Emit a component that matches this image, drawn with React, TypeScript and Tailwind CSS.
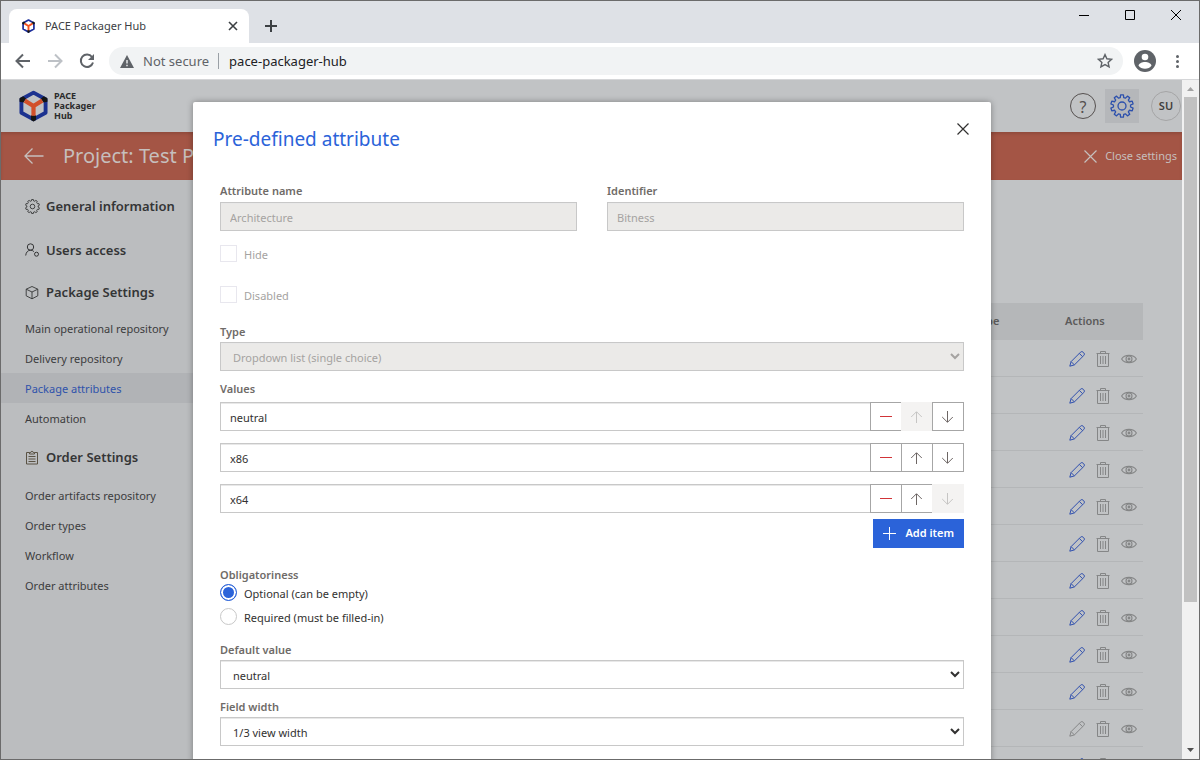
import type { ReactNode } from 'react';
import { clsx } from 'clsx';

const packageLinks = [
  'Main operational repository',
  'Delivery repository',
  'Package attributes',
  'Automation',
];
const orderLinks = ['Order artifacts repository', 'Order types', 'Workflow', 'Order attributes'];
const initialValues = ['neutral', 'x86', 'x64'];
const LOCKED_ROW = 10;

const labelClass = 'block text-[11px] leading-4 font-semibold text-[#6f6b68]';
const controlClass =
  'h-[29px] w-full min-w-0 rounded-none border border-[#c8c8c8] bg-white pt-0.5 text-[11px] text-[#323130] shadow-[inset_0_1px_0_#e8e8e8] disabled:bg-[#ebeae8] disabled:text-[#a5a3a1] disabled:opacity-100';

function gearPath(teeth: number, outer: number, inner: number, c: number) {
  const step = (Math.PI * 2) / teeth;
  const parts: string[] = [];
  for (let i = 0; i < teeth; i++) {
    const a = i * step - Math.PI / 2;
    [
      [a - step * 0.32, inner],
      [a - step * 0.2, outer],
      [a + step * 0.2, outer],
      [a + step * 0.32, inner],
    ].forEach(([angle, r]) => {
      parts.push(`${(c + r * Math.cos(angle)).toFixed(2)} ${(c + r * Math.sin(angle)).toFixed(2)}`);
    });
  }
  return `M${parts.join('L')}Z`;
}

interface IconProps {
  className?: string;
  children: ReactNode;
  box: number;
  stroke?: number;
}

function Icon({ className, children, box, stroke = 1 }: IconProps) {
  return (
    <svg
      className={clsx('shrink-0', className)}
      viewBox={`0 0 ${box} ${box}`}
      fill="none"
      stroke="currentColor"
      strokeWidth={stroke}
      aria-hidden
    >
      {children}
    </svg>
  );
}

function LogoMark({ className, dim }: { className: string; dim?: boolean }) {
  const blue = dim ? '#1c3290' : '#1d2f9c';
  const orange = dim ? '#d2502b' : '#f4511e';
  return (
    <svg className={className} viewBox="0 0 30 32" fill="none" aria-hidden>
      <path d="M15 2.2 27.500 9v14L15 29.800 2.500 23V9Z" stroke={blue} strokeWidth="4" strokeLinejoin="round" />
      <path d="M.6 11.500V8L4.400 5.800 7.400 8.600 4.600 12.500ZM29.400 11.500V8l-3.800-2.200L22.600 8.600l2.800 3.900ZM12.400 25.500h5.200v4.900L15 32l-2.600-1.600Z" fill="#141414" />
      <path d="M6 10.500 15 16l9-5.500M15 16v10" stroke={orange} strokeWidth="4.4" />
    </svg>
  );
}

function BrowserChrome() {
  return (
    <>
      <div className="flex h-[42px] shrink-0 bg-[#dee1e6] pl-2">
        <div className="mt-2 flex w-60 items-center rounded-t-lg bg-white pr-2 pl-[13px]">
          <LogoMark className="h-[14px] w-[13px]" />
          <span className="ml-[10px] flex-1 text-[11px] text-[#3c4043]">PACE Packager Hub</span>
          <button type="button" aria-label="Close tab" className="flex size-4 items-center justify-center text-[#3c4043]">
            <Icon box={10} className="size-[10px]" stroke={1.6}>
              <path d="m1 1 8 8M9 1 1 9" />
            </Icon>
          </button>
        </div>
        <button type="button" aria-label="New tab" className="mt-2 ml-3 flex w-5 items-center justify-center text-[#3c4043]">
          <Icon box={12} className="size-3" stroke={2}>
            <path d="M6 0v12M0 6h12" />
          </Icon>
        </button>
        <div className="ml-auto flex h-7 text-black">
          <button type="button" aria-label="Minimize" className="flex w-[46px] items-center justify-center">
            <Icon box={10} className="size-[10px]">
              <path d="M0 5.500h10" />
            </Icon>
          </button>
          <button type="button" aria-label="Maximize" className="flex w-[46px] items-center justify-center">
            <Icon box={10} className="size-[10px]">
              <path d="M.5.5h9v9h-9z" />
            </Icon>
          </button>
          <button type="button" aria-label="Close" className="flex w-[46px] items-center justify-center">
            <Icon box={10} className="size-[10px]">
              <path d="m0 0 10 10M10 0 0 10" />
            </Icon>
          </button>
        </div>
      </div>
      <div className="flex h-[37px] shrink-0 items-center border-b border-[#d5d6d8] bg-white px-[14px]">
        <button type="button" aria-label="Back" className="text-[#5f6368]">
          <Icon box={16} className="size-4" stroke={2}>
            <path d="M15 8H2M8 1.500 1.500 8 8 14.500" />
          </Icon>
        </button>
        <button type="button" aria-label="Forward" className="ml-4 text-[#bdc1c6]">
          <Icon box={16} className="size-4" stroke={2}>
            <path d="M1 8h13M8 1.500 14.500 8 8 14.500" />
          </Icon>
        </button>
        <button type="button" aria-label="Reload" className="ml-4 text-[#5f6368]">
          <Icon box={16} className="size-4" stroke={2}>
            <path d="M13 4A6.200 6.200 0 1 0 14 9.500" />
            <path d="M15 1v6H9Z" fill="currentColor" stroke="none" />
          </Icon>
        </button>
        <div className="ml-[14px] flex h-7 flex-1 items-center rounded-full bg-[#f1f3f4] pr-[10px] pl-[11px] text-[13px]">
          <svg className="h-[13px] w-[14px] shrink-0" viewBox="0 0 14 13" aria-hidden>
            <path d="M7 0 14 13H0Z" fill="#5f6368" />
            <path d="M6.300 5h1.400v3.500H6.300zM6.300 9.700h1.400v1.500H6.300z" fill="#f1f3f4" />
          </svg>
          <span className="ml-[9px] pt-0.5 text-[#5f6368]">Not secure</span>
          <span className="mr-[10px] ml-[9px] h-4 w-px bg-[#9aa0a6]" />
          <input
            aria-label="Address"
            defaultValue="pace-packager-hub"
            className="min-w-0 flex-1 bg-transparent pt-0.5 text-[#202124] outline-none"
          />
          <Icon box={16} className="size-4 text-[#5f6368]" stroke={1.4}>
            <path d="m8 1.600 1.900 4.200 4.600.5-3.400 3.100 1 4.500L8 11.600l-4.100 2.300 1-4.500L1.500 6.300l4.600-.5Z" />
          </Icon>
        </div>
        <svg className="ml-[11px] size-[22px]" viewBox="0 0 22 22" aria-label="Profile">
          <circle cx="11" cy="11" r="11" fill="#5f6368" />
          <circle cx="11" cy="7" r="3.300" fill="#fff" />
          <path d="M4.500 15.500c1-4.700 12-4.700 13 0-2.500 4.300-10.500 4.300-13 0Z" fill="#fff" />
        </svg>
        <button type="button" aria-label="Menu" className="ml-[13px] flex w-4 flex-col items-center gap-[2px]">
          <span className="size-[3px] rounded-full bg-[#5f6368]" />
          <span className="size-[3px] rounded-full bg-[#5f6368]" />
          <span className="size-[3px] rounded-full bg-[#5f6368]" />
        </button>
      </div>
    </>
  );
}

function AppHeader() {
  return (
    <header className="flex h-13 shrink-0 items-center pr-px pl-[18px]">
      <LogoMark className="h-8 w-[29px]" dim />
      <div className="ml-[6px] text-[9px] leading-[10px] font-bold text-[#2b2b2c]">
        PACE
        <br />
        Packager
        <br />
        Hub
      </div>
      <button
        type="button"
        aria-label="Help"
        className="ml-auto flex size-[26px] items-center justify-center rounded-full border border-[#55504f] pt-0.5 text-base text-[#55504f]"
      >
        ?
      </button>
      <button
        type="button"
        aria-label="Settings"
        className="ml-[9px] flex size-[34px] items-center justify-center bg-[#b5b7ba] text-[#2c50ad]"
      >
        <Icon box={24} className="size-6" stroke={1.3}>
          <path d={gearPath(10, 11.3, 8.6, 12)} strokeLinejoin="round" />
          <circle cx="12" cy="12" r="4" />
        </Icon>
      </button>
      <button
        type="button"
        className="ml-3 flex size-[30px] items-center justify-center rounded-full border border-[#a5a5a6] text-[11px] font-semibold text-[#413f3e]"
      >
        SU
      </button>
    </header>
  );
}

function ProjectBar() {
  return (
    <div className="flex h-12 shrink-0 items-center bg-[#a45545] pr-[5px] pl-[23px] text-[#c6bfbd] shadow-[inset_0_2px_3px_rgba(0,0,0,0.12)]">
      <button type="button" aria-label="Back to projects">
        <Icon box={20} className="size-5" stroke={1.3}>
          <path d="M19.500 10H1M8.500 2.500 1 10l7.500 7.500" />
        </Icon>
      </button>
      <h1 className="ml-[19px] text-xl font-normal">Project: Test Project</h1>
      <button type="button" className="ml-auto flex items-center gap-2 pt-px text-[11px]">
        <Icon box={13} className="size-[13px]" stroke={1.2}>
          <path d="m.5.5 12 12M12.500.5l-12 12" />
        </Icon>
        Close settings
      </button>
    </div>
  );
}

function SidebarHeading({ icon, className, children }: { icon: ReactNode; className: string; children: ReactNode }) {
  return (
    <a
      href="#section"
      className={clsx('flex items-center gap-[6px] pl-6 text-[13px] font-semibold text-[#343536]', className)}
    >
      {icon}
      <span className="pt-px">{children}</span>
    </a>
  );
}

function SidebarLinks({ items, active }: { items: string[]; active?: string }) {
  return (
    <ul>
      {items.map((item) => (
        <li key={item}>
          <a
            href="#page"
            className={clsx(
              'flex h-[30px] items-center pt-0.5 pl-6 text-[11px] whitespace-nowrap',
              item === active ? 'bg-[#b1b3b6] text-[#2f52ab]' : 'text-[#3b3c3d]',
            )}
          >
            {item}
          </a>
        </li>
      ))}
    </ul>
  );
}

function Sidebar() {
  return (
    <nav className="w-[210px] shrink-0 bg-[#bbbdbf] pt-1">
      <SidebarHeading
        className="h-11"
        icon={
          <Icon box={15} className="size-[15px]" stroke={0.9}>
            <path d={gearPath(10, 7, 5.7, 7.5)} />
            <circle cx="7.5" cy="7.5" r="2.300" />
          </Icon>
        }
      >
        General information
      </SidebarHeading>
      <SidebarHeading
        className="h-11"
        icon={
          <Icon box={15} className="size-[15px]">
            <circle cx="5.500" cy="4" r="3.200" />
            <path d="M.7 12.500C1 9.200 3 7.200 5.500 7.200c1.500 0 2.600.5 3.400 1.400" />
            <circle cx="11.500" cy="11.200" r="2" />
          </Icon>
        }
      >
        Users access
      </SidebarHeading>
      <SidebarHeading
        className="h-[41px]"
        icon={
          <Icon box={15} className="size-[15px]" stroke={0.9}>
            <path d="m7 1.500 5.800 2.700v6.600L7 13.800l-5.800-3V4.200ZM1.200 4.200 7 7l5.800-2.800M7 7v6.800" />
          </Icon>
        }
      >
        Package Settings
      </SidebarHeading>
      <SidebarLinks items={packageLinks} active="Package attributes" />
      <SidebarHeading
        className="h-[47px] pt-px"
        icon={
          <Icon box={15} className="size-[15px] text-[#5a5344]">
            <path d="M4.500 2.500h-3v11.500h11V2.500h-3M4.500 4V2.500h1.300a1.200 1.200 0 0 1 2.400 0h1.300V4ZM3.500 6.500h7M3.500 9h7M3.500 11.500h7" />
          </Icon>
        }
      >
        Order Settings
      </SidebarHeading>
      <SidebarLinks items={orderLinks} />
    </nav>
  );
}

function RowActions({ locked }: { locked: boolean }) {
  return (
    <div className="flex h-9 items-center pt-0.5 pl-1 text-[#858687]">
      <button type="button" aria-label="Edit" className={locked ? undefined : 'text-[#2f4fae]'}>
        <Icon box={16} className="size-4">
          <path d="m.8 15.200 1.300-4.600L11.500 1.200a1.900 1.900 0 0 1 2.700 0l.6.6a1.900 1.900 0 0 1 0 2.700l-9.400 9.400ZM2.100 10.600l3.300 3.300M10.300 2.400l3.300 3.300" />
        </Icon>
      </button>
      <button type="button" aria-label="Delete" className="ml-[10px]">
        <Icon box={16} className="size-4">
          <path d="M1.500 2.500h13M5.500 2.500v-2h5v2M2.500 2.500v13h11v-13M5.500 5v8M8 5v8M10.500 5v8" />
        </Icon>
      </button>
      <button type="button" aria-label="Preview" className="ml-[10px]">
        <Icon box={16} className="size-4" stroke={1.100}>
          <path d="M.6 8C3.500 3.200 12.500 3.200 15.400 8 12.500 12.800 3.500 12.800.6 8Z" />
          <circle cx="8" cy="8" r="3" />
          <circle cx="8" cy="8" r=".9" fill="currentColor" />
        </Icon>
      </button>
    </div>
  );
}

function AttributeTable() {
  return (
    <table className="w-full table-fixed border-collapse text-left">
      <thead>
        <tr className="h-[37px] bg-[#b5b7b9] text-[11px] text-[#5c5b5b]">
          <th scope="col" aria-label="Name" />
          <th scope="col" className="w-[91px] font-semibold">
            Type
          </th>
          <th scope="col" className="w-[78px] font-semibold">
            Actions
          </th>
        </tr>
      </thead>
      <tbody>
        {Array.from({ length: 12 }, (_, row) => (
          <tr key={row} className="border-b border-[#b4b6b8]">
            <td />
            <td />
            <td>
              <RowActions locked={row === LOCKED_ROW} />
            </td>
          </tr>
        ))}
      </tbody>
    </table>
  );
}

function ItemButton({ label, disabled, children }: { label: string; disabled?: boolean; children: ReactNode }) {
  return (
    <button
      type="button"
      aria-label={label}
      disabled={disabled}
      className="-ml-px flex h-[29px] w-8 shrink-0 items-center justify-center border border-[#a6a6a6] bg-white text-[#6d6664] first-of-type:ml-0 disabled:border-[#f4f3f2] disabled:bg-[#f4f3f2] disabled:text-[#c6c5c4]"
    >
      {children}
    </button>
  );
}

function ValueRow({ value, index, count }: { value: string; index: number; count: number }) {
  return (
    <li className="flex">
      <input aria-label={`Value ${index + 1}`} defaultValue={value} className={clsx(controlClass, 'flex-1 border-r-0 px-[9px]')} />
      <ItemButton label="Remove">
        <Icon box={12} className="size-3 text-[#d13438]">
          <path d="M0 5.500h12" />
        </Icon>
      </ItemButton>
      <ItemButton label="Move up" disabled={index === 0}>
        <Icon box={12} className="size-3">
          <path d="M5.500 12V1M.2 6 5.500.7 10.800 6" />
        </Icon>
      </ItemButton>
      <ItemButton label="Move down" disabled={index === count - 1}>
        <Icon box={12} className="size-3">
          <path d="M5.500 0v11M.2 6l5.300 5.300L10.800 6" />
        </Icon>
      </ItemButton>
    </li>
  );
}

function CheckOption({ label }: { label: string }) {
  return (
    <label className="flex items-start gap-[7px] self-start text-[11px] leading-5 text-[#a5a3a1]">
      <input type="checkbox" disabled className="size-[17px] appearance-none border border-[#e8e7ee] bg-white" />
      {label}
    </label>
  );
}

function RadioOption({ label, checked }: { label: string; checked?: boolean }) {
  return (
    <label className="flex items-start gap-[7px] self-start text-[11px] leading-5 text-[#323130]">
      <input
        type="radio"
        name="obligatoriness"
        defaultChecked={checked}
        className="size-[17px] appearance-none rounded-full border border-[#c8c8c8] bg-white checked:border-[#2b63d9] checked:bg-[#2b63d9] checked:shadow-[inset_0_0_0_2px_#fff]"
      />
      {label}
    </label>
  );
}

function AttributeDialog() {
  return (
    <section
      role="dialog"
      aria-labelledby="dialog-title"
      className="w-full max-w-[798px] rounded-t-xs bg-white px-[27px] shadow-[0_0_6px_rgba(0,0,0,0.35)]"
    >
      <div className="flex items-start justify-between pt-5">
        <h2 id="dialog-title" className="-ml-[7px] text-[19px] leading-[34px] text-[#2b63d9]">
          Pre-defined attribute
        </h2>
        <button type="button" aria-label="Close dialog" className="-mr-[6px] flex size-[14px] text-[#323130]">
          <Icon box={12} className="m-auto size-3" stroke={1.2}>
            <path d="m.5.5 11 11M11.500.5l-11 11" />
          </Icon>
        </button>
      </div>

      <form className="mt-[27px] flex flex-col">
        <div className="grid grid-cols-2 gap-[30px]">
          <div>
            <label htmlFor="name" className={clsx(labelClass, 'mb-[3px]')}>
              Attribute name
            </label>
            <input id="name" disabled defaultValue="Architecture" className={clsx(controlClass, 'px-[9px]')} />
          </div>
          <div>
            <label htmlFor="identifier" className={clsx(labelClass, 'mb-[3px]')}>
              Identifier
            </label>
            <input id="identifier" disabled defaultValue="Bitness" className={clsx(controlClass, 'px-[9px]')} />
          </div>
        </div>

        <div className="mt-[14px] flex flex-col gap-[21px]">
          <CheckOption label="Hide" />
          <CheckOption label="Disabled" />
        </div>

        <label htmlFor="type" className={clsx(labelClass, 'mt-[18px] mb-[2px]')}>
          Type
        </label>
        <select id="type" disabled className={clsx(controlClass, 'px-2')}>
          <option>Dropdown list (single choice)</option>
        </select>

        <h3 className={clsx(labelClass, 'mt-[10px] mb-[5px]')}>Values</h3>
        <ul className="flex flex-col gap-3">
          {initialValues.map((value, index) => (
            <ValueRow key={value} value={value} index={index} count={initialValues.length} />
          ))}
        </ul>
        <button
          type="button"
          className="mt-[6px] flex h-[29px] items-center gap-[9px] self-end bg-[#2b63d9] px-[10px] text-[11px] font-semibold text-white"
        >
          <Icon box={13} className="size-[13px]">
            <path d="M6.500 0v13M0 6.500h13" />
          </Icon>
          Add item
        </button>

        <fieldset className="mt-[19px] flex flex-col">
          <legend className={clsx(labelClass, 'mb-px')}>Obligatoriness</legend>
          <div className="flex flex-col gap-1">
            <RadioOption label="Optional (can be empty)" checked />
            <RadioOption label="Required (must be filled-in)" />
          </div>
        </fieldset>

        <label htmlFor="default-value" className={clsx(labelClass, 'mt-[14px] mb-[2px]')}>
          Default value
        </label>
        <select id="default-value" className={clsx(controlClass, 'px-2')}>
          <option>neutral</option>
          <option>x86</option>
          <option>x64</option>
        </select>
        <label htmlFor="field-width" className={clsx(labelClass, 'mt-[10px] mb-[2px]')}>
          Field width
        </label>
        <select id="field-width" className={clsx(controlClass, 'mb-10 px-2')}>
          <option>1/3 view width</option>
        </select>
      </form>
    </section>
  );
}

function Scrollbar() {
  return (
    <div className="flex w-[17px] shrink-0 flex-col items-center bg-[#f1f1f1]" aria-hidden>
      <svg className="size-[17px] shrink-0" viewBox="0 0 17 17">
        <path d="M5 11h7L8.500 7Z" fill="#a3a3a3" />
      </svg>
      <div className="min-h-0 w-[13px] flex-[505] bg-[#c1c1c1]" />
      <div className="min-h-0 flex-[140]" />
      <svg className="size-[17px] shrink-0" viewBox="0 0 17 17">
        <path d="M5 6h7l-3.500 4Z" fill="#505050" />
      </svg>
    </div>
  );
}

export default function App() {
  return (
    <div className="flex h-screen flex-col overflow-hidden border border-[#6b6b6b] bg-[#c1c3c5] font-['Noto_Sans','Open_Sans',sans-serif]">
      <BrowserChrome />
      <div className="flex min-h-0 flex-1">
        <div className="relative flex min-w-0 flex-1 flex-col overflow-hidden">
          <AppHeader />
          <ProjectBar />
          <div className="flex min-h-0 flex-1">
            <Sidebar />
            <main className="min-w-0 flex-1 pt-[123px] pr-[39px] pl-8">
              <AttributeTable />
            </main>
          </div>
          <div className="absolute inset-0 flex items-start justify-center overflow-hidden pt-[22px] pl-px">
            <AttributeDialog />
          </div>
        </div>
        <Scrollbar />
      </div>
    </div>
  );
}
